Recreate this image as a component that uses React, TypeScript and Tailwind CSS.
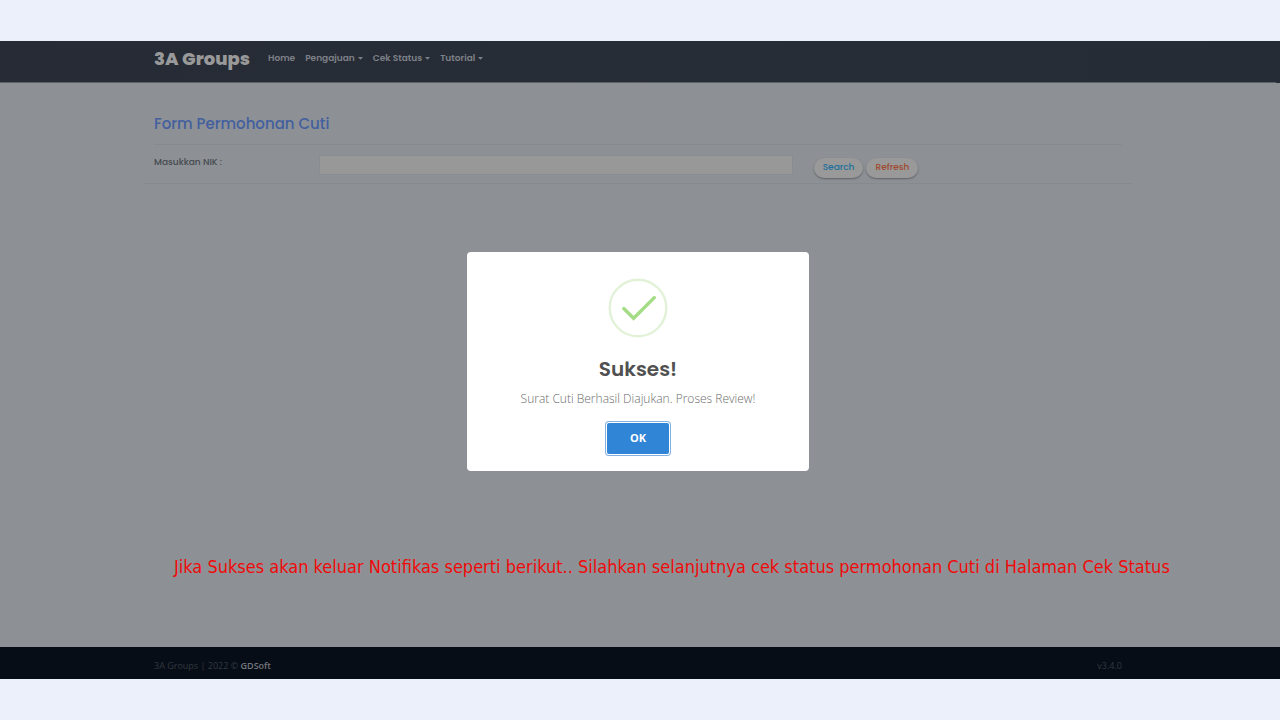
import { useState } from "react";

const menus = ["Pengajuan", "Cek Status", "Tutorial"];

function Navbar() {
  return (
    <header className="border-b border-[#5c6067] bg-linear-to-r from-[#262b35] via-[#272d37] to-[#252c35] font-['Poppins','Inter',sans-serif]">
      <nav className="mx-auto flex h-[41px] max-w-[988px] items-center px-[10px] pb-[5px]">
        <a href="#" className="mr-[18px] text-lg font-extrabold text-[#999999]">
          3A Groups
        </a>
        <a href="#" className="mr-[10px] text-[9px] font-semibold text-[#7d8187]">
          Home
        </a>
        {menus.map((menu) => (
          <button
            key={menu}
            type="button"
            className="mr-[10px] flex items-center gap-[3px] text-[9px] font-semibold text-[#7d8187]"
          >
            {menu}
            <svg width="5" height="3" viewBox="0 0 5 3" className="mb-0.5" fill="currentColor">
              <path d="M0 0h5L2.5 2.7z" />
            </svg>
          </button>
        ))}
      </nav>
    </header>
  );
}

function LeaveForm() {
  const pill = "h-5 rounded-full bg-[#999999] px-[9px] text-[9px] font-medium shadow-[0_1px_2px_#5d6167]";

  return (
    <section className="mx-auto w-full max-w-[988px] font-['Poppins','Inter',sans-serif]">
      <div className="mx-[10px] border-b border-[#858a91] pt-7 pb-2">
        <h1 className="text-[15px] leading-6 font-medium text-[#435f9f]">Form Permohonan Cuti</h1>
      </div>
      <form
        className="grid grid-cols-12 border-b border-[#858a91] pt-[10px] pb-[5px]"
        onSubmit={(e) => e.preventDefault()}
      >
        <label htmlFor="nik" className="col-span-2 px-[10px] text-[9px] leading-[14px] font-medium text-[#454950]">
          Masukkan NIK :
        </label>
        <div className="col-span-6 px-[10px]">
          <input
            id="nik"
            type="text"
            className="block h-5 w-full rounded-xs border border-[#888c94] bg-[#989898] px-2 text-[10px] outline-none"
          />
        </div>
        <div className="col-span-4 flex gap-[3px] px-[11px] pt-[3px]">
          <button type="submit" className={`${pill} text-[#20709b]`}>
            Search
          </button>
          <button type="reset" className={`${pill} text-[#a04a30]`}>
            Refresh
          </button>
        </div>
      </form>
    </section>
  );
}

function SuccessDialog({ onClose }: { onClose: () => void }) {
  return (
    <div className="absolute inset-0 flex items-center justify-center pt-[3px] pr-1">
      <section
        role="dialog"
        aria-labelledby="dialog-title"
        className="flex w-[342px] flex-col items-center rounded-sm bg-white px-4 pt-[26px] pb-[17px]"
      >
        <svg width="60" height="60" viewBox="0 0 60 60" fill="none">
          <circle cx="30" cy="30" r="28.3" stroke="#e2f2d8" strokeWidth="2.4" />
          <path d="M15.8 30.5L25.6 40.3L46.3 19.6" stroke="#a5dc86" strokeWidth="3.4" strokeLinecap="round" />
        </svg>
        <h2
          id="dialog-title"
          className="mt-[15px] text-xl leading-8 font-semibold text-[#505050] font-['Poppins','Inter',sans-serif]"
        >
          Sukses!
        </h2>
        <p className="mt-1 text-xs leading-5 font-light text-[#6b6b6b]">Surat Cuti Berhasil Diajukan. Proses Review!</p>
        <button
          type="button"
          onClick={onClose}
          className="mt-[14px] h-[31px] w-[62px] rounded-xs bg-[#3085d6] text-[11px] font-bold text-white shadow-[0_0_0_1px_#fff,0_0_0_2px_#83b0de]"
        >
          OK
        </button>
      </section>
    </div>
  );
}

export default function App() {
  const [open, setOpen] = useState(true);

  return (
    <div className="flex min-h-screen flex-col bg-[#ebf0fa] py-[41px] font-['Open_Sans',sans-serif]">
      <div className="relative flex flex-1 flex-col bg-[#8d9195]">
        <div className="bg-[#262c36] pr-1">
          <Navbar />
        </div>
        <main className="flex flex-1 flex-col">
          <div className="pt-px pr-1">
            <LeaveForm />
          </div>
          <p className="mt-auto pb-16 pl-[174px] text-lg leading-8 text-[#f00a0a] font-['Tahoma','DejaVu_Sans_Condensed','Noto_Sans',sans-serif]">
            Jika Sukses akan keluar Notifikas seperti berikut.. Silahkan selanjutnya cek status permohonan Cuti di
            Halaman Cek Status
          </p>
        </main>
        <footer className="bg-[#060d17] pr-1">
          <div className="mx-auto flex h-8 max-w-[988px] items-center justify-between px-[10px] pt-[5px] text-[9px] text-[#33383f]">
            <span>
              3A Groups | 2022 ©{" "}
              <a href="#" className="font-semibold text-[#74777c]">
                GDSoft
              </a>
            </span>
            <span>v3.4.0</span>
          </div>
        </footer>
        {open && <SuccessDialog onClose={() => setOpen(false)} />}
      </div>
    </div>
  );
}
